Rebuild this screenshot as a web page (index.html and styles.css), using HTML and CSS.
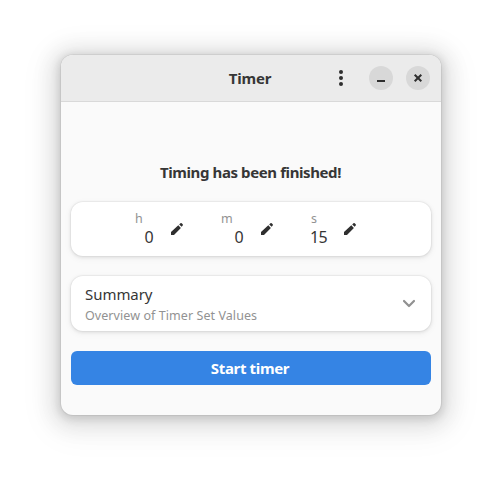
FILE: index.html
```html
<!DOCTYPE html>
<html lang="en">
<head>
<meta charset="utf-8">
<title>Timer</title>
<link rel="stylesheet" href="styles.css">
</head>
<body>
<svg class="defs" width="0" height="0">
  <symbol id="pencil" viewBox="0 0 16 16">
    <path d="M2 14v-3l7.3-6.7 2.6 2.6L5 14zM10.2 3.4l1.2-1.1q.7-.6 1.3 0l1 1q.6.6 0 1.3L12.6 5.8z"/>
  </symbol>
</svg>
<main class="window">
  <header class="headerbar">
    <h1 class="title">Timer</h1>
    <div class="controls">
      <svg class="menu" width="16" height="16"><circle cx="8" cy="2" r="2"/><circle cx="8" cy="8" r="2"/><circle cx="8" cy="14" r="2"/></svg>
      <button class="round" aria-label="Minimize"><svg width="16" height="16"><path d="M4 10h8v2H4z"/></svg></button>
      <button class="round" aria-label="Close"><svg width="16" height="16"><path class="cross" d="M4.7 4.7l6.6 6.6M11.3 4.7l-6.6 6.6"/></svg></button>
    </div>
  </header>
  <section class="content">
    <h2 class="status">Timing has been finished!</h2>
    <div class="card fields">
      <div class="field"><div class="label">h</div><div class="value">0</div></div>
      <svg class="edit edit-h" width="16" height="16"><use href="#pencil"/></svg>
      <div class="field minutes"><div class="label">m</div><div class="value">0</div></div>
      <svg class="edit edit-m" width="16" height="16"><use href="#pencil"/></svg>
      <div class="field seconds"><div class="label">s</div><div class="value">15</div></div>
      <svg class="edit" width="16" height="16"><use href="#pencil"/></svg>
    </div>
    <div class="card summary">
      <div class="text">
        <div class="name">Summary</div>
        <div class="description">Overview of Timer Set Values</div>
      </div>
      <svg class="chevron" width="16" height="16"><path d="M3 5l5 5 5-5"/></svg>
    </div>
    <button class="start">Start timer</button>
  </section>
</main>
</body>
</html>
```
FILE: styles.css
```css
* { box-sizing: border-box; }
body {
  margin: 0;
  padding: 55px 61px 67px;
  background: #fff;
  color: #363636;
  font: 15px/20px "Noto Sans", sans-serif;
}
h1, h2 { margin: 0; font-size: 15px; font-weight: 700; letter-spacing: -.4px; }
button { border: 0; padding: 0; font: inherit; color: inherit; }
svg { display: block; fill: #2f2f2f; flex: none; }
.defs { position: absolute; }
.window {
  width: 380px;
  height: 360px;
  border-radius: 12px;
  background: #fafafa;
  overflow: hidden;
  box-shadow: 0 2px 8px 2px rgba(0,0,0,.13), 0 3px 20px 10px rgba(0,0,0,.09), 0 6px 32px 16px rgba(0,0,0,.04), 0 0 0 1px rgba(0,0,0,.05);
}
.headerbar {
  display: grid;
  grid-template-columns: 1fr auto 1fr;
  align-items: center;
  height: 47px;
  padding-right: 11px;
  padding-left: 11px;
  background: #ebebeb;
  border-bottom: 1px solid #d9d9d9;
}
.title { grid-column: 2; margin-right: 2px; letter-spacing: -.2px; }
.controls { grid-column: 3; display: flex; align-items: center; justify-content: flex-end; }
.menu { margin-right: 20px; }
.round {
  display: grid;
  place-items: center;
  width: 24px;
  height: 24px;
  border-radius: 50%;
  background: #d8d8d8;
}
.round + .round { margin-left: 13px; }
.cross { stroke: #2f2f2f; stroke-width: 2; }
.content { padding: 60px 10px 0; }
.status { text-align: center; height: 40px; padding-right: 1px; }
.card {
  display: flex;
  border-radius: 12px;
  background: #fff;
  box-shadow: 0 0 0 1px rgba(0,0,0,.03), 0 1px 3px 1px rgba(0,0,0,.07), 0 2px 6px 2px rgba(0,0,0,.03);
}
.fields { height: 54px; padding: 7px 0 0 64px; }
.field { width: 19px; }
.label { height: 18px; font-size: 12.5px; color: #929292; }
.value { padding-right: 1px; text-align: right; font-size: 16px; letter-spacing: -.6px; }
.edit { margin: 12px 0 0 15px; }
.edit-h { margin-right: 36px; }
.edit-m { margin-right: 35px; }
.minutes { width: 23px; }
.seconds { width: 17px; }
.seconds .label { padding-left: 1px; }
.seconds .value { padding-right: 0; }
.summary { align-items: center; justify-content: space-between; height: 55px; margin-top: 20px; padding: 0 14px; }
.text { padding-top: 2px; }
.name { height: 21px; line-height: 21px; letter-spacing: -.05px; }
.description { padding-top: 1px; font-size: 12.5px; letter-spacing: .07px; color: #929292; }
.chevron { fill: none; stroke: #919191; stroke-width: 2.2; stroke-linecap: round; stroke-linejoin: round; }
.start {
  display: block;
  width: 100%;
  height: 34px;
  margin-top: 20px;
  padding-right: 2px;
  border-radius: 6px;
  background: #3584e4;
  color: #fff;
  font-weight: 700;
  letter-spacing: -.35px;
}
```
